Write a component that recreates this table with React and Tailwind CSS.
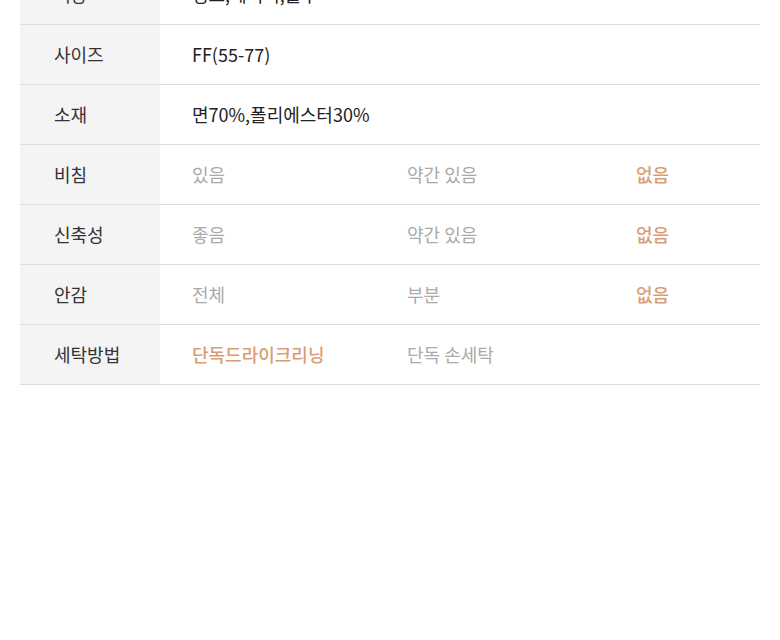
const rows = [
  { label: "색상", values: ["핑크,베이지,블루"] },
  { label: "사이즈", values: ["FF(55-77)"] },
  { label: "소재", values: ["면70%,폴리에스터30%"] },
  { label: "비침", values: ["있음", "약간 있음", "없음"], active: 2 },
  { label: "신축성", values: ["좋음", "약간 있음", "없음"], active: 2 },
  { label: "안감", values: ["전체", "부분", "없음"], active: 2 },
  { label: "세탁방법", values: ["단독드라이크리닝", "단독 손세탁"], active: 0 },
];

const widths = ["w-[215px]", "w-[229px]", "w-[124px]"];

const App = () => {
  return (
    <div
      className="h-[640px] w-[780px] overflow-hidden bg-white"
      style={{ fontFamily: '"Noto Sans CJK KR", "Noto Sans", sans-serif' }}
    >
      <div className="-mt-[35px] ml-[20px] w-[740px]">
        {rows.map((row) => (
          <div key={row.label} className="flex h-[60px] border-b border-[#dddddd]">
            <div className="flex w-[140px] items-center bg-[#f4f4f4] pl-[34px] text-[18px] text-[#333333]">
              {row.label}
            </div>
            <div className="flex flex-1 items-center pl-[32px] text-[18px]">
              {row.values.map((v, i) => {
                let color = "text-[#222222]";
                if (row.active !== undefined) {
                  color = i === row.active ? "text-[#d99d76] font-medium" : "text-[#aaaaaa]";
                }
                return (
                  <div key={v} className={`${row.values.length > 1 ? widths[i] : ""} ${color}`}>
                    {v}
                  </div>
                );
              })}
            </div>
          </div>
        ))}
      </div>
    </div>
  );
};

export default App;
